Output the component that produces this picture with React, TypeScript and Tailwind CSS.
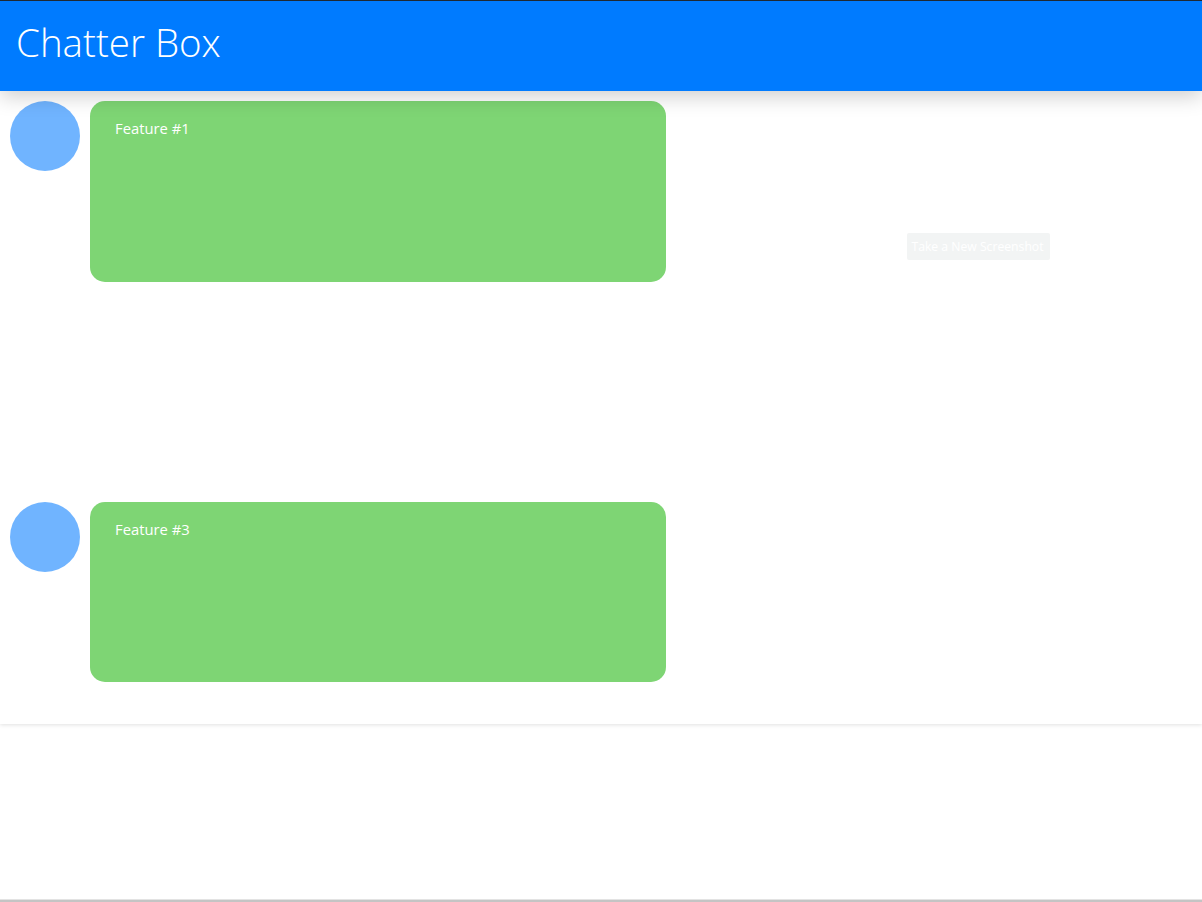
const features = ["Feature #1", "Feature #3"];

function FeatureRow({ label }: { label: string }) {
  return (
    <div className="flex items-start gap-[10px]">
      <div className="h-[70px] w-[70px] shrink-0 rounded-full bg-[#70b4ff]" />
      <div className="h-[180.5px] w-[576px] rounded-[15px] bg-[#7ed574] px-[25px] py-[17px] text-[14.8px] leading-[21px] text-white">
        {label}
      </div>
    </div>
  );
}

export default function App() {
  return (
    <div className="relative flex h-[902px] w-full flex-col overflow-hidden bg-white font-['Open_Sans',sans-serif]">
      <header className="z-10 flex h-[91px] shrink-0 items-center border-t border-[#1f2933] bg-[#007bff] pl-4 shadow-[0_5px_20px_rgba(0,0,0,0.2)]">
        <h1 className="pb-[8px] text-[38.5px] font-light leading-none text-white">Chatter Box</h1>
      </header>

      <main className="flex h-[633px] shrink-0 flex-col gap-[220px] pl-[10px] pt-[10px] shadow-[0_1px_4px_rgba(0,0,0,0.12)]">
        {features.map((label) => (
          <FeatureRow key={label} label={label} />
        ))}
      </main>

      <div className="mt-auto h-[3px] w-full border-t border-[#e3e3e3] bg-[#c4c4c4]" />

      <button
        type="button"
        className="absolute left-[907px] top-[233px] flex h-[27px] w-[143px] items-center justify-center rounded-[2px] bg-[#f2f4f4] pr-[2px] pt-[2px] text-[12.2px] text-white"
      >
        Take a New Screenshot
      </button>
    </div>
  );
}
